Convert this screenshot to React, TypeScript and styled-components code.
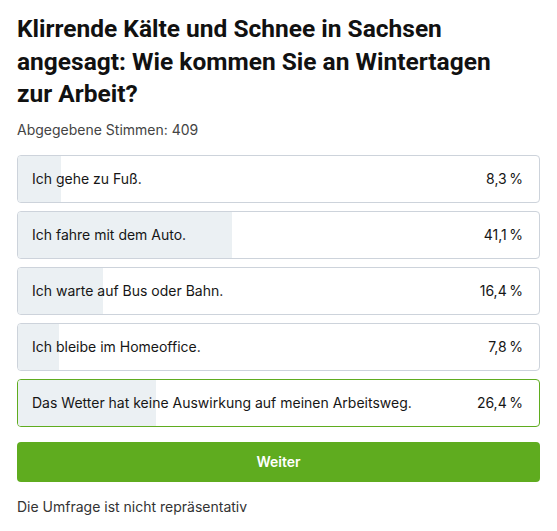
import React from "react";
import styled, { createGlobalStyle } from "styled-components";

const Global = createGlobalStyle`
  html, body { margin: 0; padding: 0; background: #fff; }
  body { font-family: Inter, "Noto Sans", sans-serif; }
`;

const Page = styled.div`
  padding: 13px 17px 0 17px;
  width: 523px;
`;

const Title = styled.h1`
  margin: 0;
  max-width: 505px;
  font-family: Roboto, "Liberation Sans", sans-serif;
  font-weight: 700;
  font-size: 24.5px;
  line-height: 32.5px;
  color: #111;
`;

const Votes = styled.div`
  margin-top: 9px;
  font-size: 14px;
  line-height: 20px;
  color: #444;
`;

const List = styled.div`
  margin-top: 15px;
  display: flex;
  flex-direction: column;
  gap: 8px;
`;

const Option = styled.div<{ $selected?: boolean }>`
  position: relative;
  box-sizing: border-box;
  height: 48px;
  border: 1px solid ${(p) => (p.$selected ? "#5fac1f" : "#cdd3db")};
  border-radius: 4px;
  overflow: hidden;
  display: flex;
  align-items: center;
  justify-content: space-between;
  padding: 0 16px 0 14px;
  font-size: 14px;
  color: #161616;
`;

const Fill = styled.div`
  position: absolute;
  left: 0;
  top: 0;
  bottom: 0;
  background: #ebf0f3;
`;

const Label = styled.span`
  position: relative;
`;

const Percent = styled.span`
  position: relative;
`;

const Button = styled.button`
  margin-top: 15px;
  width: 100%;
  height: 40px;
  border: none;
  border-radius: 4px;
  background: #5fac1f;
  color: #fff;
  font-family: Inter, sans-serif;
  font-size: 14px;
  font-weight: 600;
`;

const Note = styled.div`
  margin-top: 15px;
  font-size: 14px;
  line-height: 20px;
  color: #333;
`;

const options = [
  { label: "Ich gehe zu Fuß.", pct: 8.3 },
  { label: "Ich fahre mit dem Auto.", pct: 41.1 },
  { label: "Ich warte auf Bus oder Bahn.", pct: 16.4 },
  { label: "Ich bleibe im Homeoffice.", pct: 7.8 },
  { label: "Das Wetter hat keine Auswirkung auf meinen Arbeitsweg.", pct: 26.4, selected: true },
];

export default function App() {
  return (
    <>
      <Global />
      <Page>
        <Title>
          Klirrende Kälte und Schnee in Sachsen angesagt: Wie kommen Sie an Wintertagen zur Arbeit?
        </Title>
        <Votes>Abgegebene Stimmen: 409</Votes>
        <List>
          {options.map((o) => (
            <Option key={o.label} $selected={o.selected}>
              <Fill style={{ width: `${o.pct}%` }} />
              <Label>{o.label}</Label>
              <Percent>{o.pct.toFixed(1).replace(".", ",")}&thinsp;%</Percent>
            </Option>
          ))}
        </List>
        <Button>Weiter</Button>
        <Note>Die Umfrage ist nicht repräsentativ</Note>
      </Page>
    </>
  );
}
